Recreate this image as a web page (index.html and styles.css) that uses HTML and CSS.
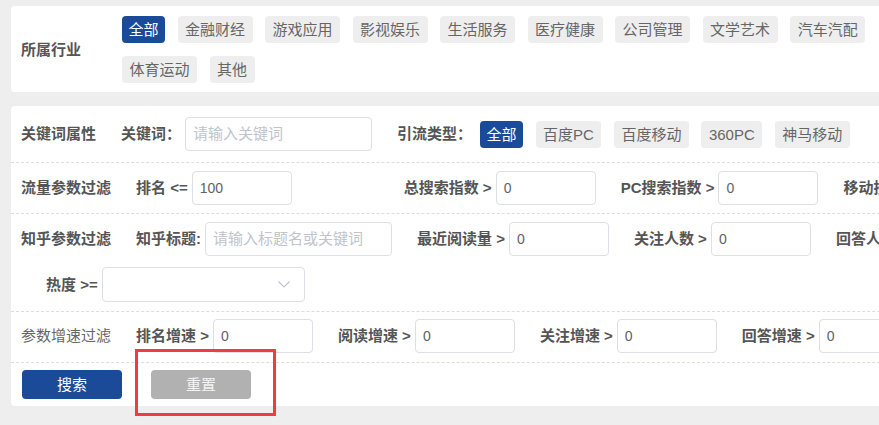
FILE: index.html
```html
<!DOCTYPE html>
<html lang="zh-CN">
<head>
<meta charset="utf-8">
<title>关键词筛选</title>
<link rel="stylesheet" href="styles.css">
</head>
<body>
<div class="page">
  <section class="card industry">
    <div class="industry-label">所属行业</div>
    <div class="tag-list">
      <span class="tag active">全部</span>
      <span class="tag">金融财经</span>
      <span class="tag">游戏应用</span>
      <span class="tag">影视娱乐</span>
      <span class="tag">生活服务</span>
      <span class="tag">医疗健康</span>
      <span class="tag">公司管理</span>
      <span class="tag">文学艺术</span>
      <span class="tag">汽车汽配</span>
      <span class="tag">体育运动</span>
      <span class="tag">其他</span>
    </div>
  </section>

  <section class="card filters">
    <div class="row row-keyword">
      <div class="cat">关键词属性</div>
      <div class="field"><span class="flabel">关键词：</span><input class="inp w-long" type="text" placeholder="请输入关键词"></div>
      <div class="field"><span class="flabel">引流类型：</span>
        <div class="tags">
          <span class="tag active">全部</span>
          <span class="tag">百度PC</span>
          <span class="tag">百度移动</span>
          <span class="tag">360PC</span>
          <span class="tag">神马移动</span>
        </div>
      </div>
    </div>

    <div class="row row-flow">
      <div class="cat">流量参数过滤</div>
      <div class="field"><span class="flabel">排名 &lt;=</span><input class="inp w-short" type="text" value="100"></div>
      <div class="field gap-wide"><span class="flabel">总搜索指数 &gt;</span><input class="inp w-short" type="text" value="0"></div>
      <div class="field"><span class="flabel">PC搜索指数 &gt;</span><input class="inp w-short" type="text" value="0"></div>
      <div class="field"><span class="flabel">移动搜索指数 &gt;</span><input class="inp w-short" type="text" value="0"></div>
    </div>

    <div class="row row-zhihu">
      <div class="line">
        <div class="cat">知乎参数过滤</div>
        <div class="field"><span class="flabel">知乎标题:</span><input class="inp w-long" type="text" placeholder="请输入标题名或关键词"></div>
        <div class="field"><span class="flabel">最近阅读量 &gt;</span><input class="inp w-short" type="text" value="0"></div>
        <div class="field"><span class="flabel">关注人数 &gt;</span><input class="inp w-short" type="text" value="0"></div>
        <div class="field"><span class="flabel">回答人数 &gt;</span><input class="inp w-short" type="text" value="0"></div>
      </div>
      <div class="line">
        <div class="field"><span class="flabel">热度 &gt;=</span>
          <div class="select">
            <svg class="chev" width="12" height="7" viewBox="0 0 12 7"><polyline points="0.5,0.5 6,6 11.5,0.5" fill="none" stroke="#c0c4cc" stroke-width="1.2"/></svg>
          </div>
        </div>
      </div>
    </div>

    <div class="row row-speed">
      <div class="cat cat-light">参数增速过滤</div>
      <div class="field"><span class="flabel">排名增速 &gt;</span><input class="inp w-short" type="text" value="0"></div>
      <div class="field"><span class="flabel">阅读增速 &gt;</span><input class="inp w-short" type="text" value="0"></div>
      <div class="field"><span class="flabel">关注增速 &gt;</span><input class="inp w-short" type="text" value="0"></div>
      <div class="field"><span class="flabel">回答增速 &gt;</span><input class="inp w-short" type="text" value="0"></div>
    </div>

    <div class="actions">
      <button class="btn btn-primary" type="button">搜索</button>
      <button class="btn btn-reset" type="button">重置</button>
    </div>
  </section>

  <div class="highlight"></div>
</div>
</body>
</html>
```

FILE: styles.css
```css
html, body {
  margin: 0;
  padding: 0;
  overflow: hidden;
}

body {
  background: #eeeeee;
  font-family: "Liberation Sans", "Noto Sans CJK SC", sans-serif;
  font-size: 15px;
  color: #555;
  width: 879px;
  height: 425px;
}

.page {
  position: relative;
  padding: 6px 0 0 11px;
  width: 1400px;
}

.card {
  background: #fff;
  border-radius: 4px;
}

/* industry card */
.industry {
  display: flex;
  align-items: center;
  padding: 10px 0 9px 10px;
}

.industry-label {
  width: 101px;
  font-weight: bold;
  line-height: 20px;
}

.tag-list {
  display: flex;
  flex-wrap: wrap;
  gap: 13px 12.5px;
  width: 800px;
}

.tag {
  display: inline-block;
  height: 27px;
  line-height: 27px;
  padding: 0 7.5px;
  background: #eeeeee;
  color: #666;
  border-radius: 4px;
  font-size: 15px;
  white-space: nowrap;
}

.tag.active {
  background: #1a4a98;
  color: #fff;
  padding: 0 6.5px;
}

/* filters card */
.filters {
  margin-top: 14px;
}

.row {
  display: flex;
  align-items: center;
  padding-left: 10px;
  border-bottom: 1px dashed #dddddd;
}

.row-keyword { padding-top: 11px; padding-bottom: 11px; }
.row-flow { padding-top: 8px; padding-bottom: 8px; }
.row-zhihu {
  flex-direction: column;
  align-items: flex-start;
  gap: 11px;
  padding-top: 8px;
  padding-bottom: 9px;
}
.row-speed { padding-top: 7px; padding-bottom: 9px; }

.line {
  display: flex;
  align-items: center;
}

.cat {
  font-weight: bold;
  white-space: nowrap;
  line-height: 20px;
}

.cat-light {
  font-weight: normal;
  color: #666;
}

.field {
  display: flex;
  align-items: center;
  gap: 4px;
  margin-left: 25px;
  white-space: nowrap;
}

.gap-wide {
  margin-left: 112px;
}

.flabel {
  font-weight: bold;
  line-height: 20px;
}

.tags {
  display: flex;
  gap: 12.5px;
  margin-left: 4px;
}

.inp {
  box-sizing: border-box;
  height: 34px;
  border: 1px solid #dcdfe6;
  border-radius: 4px;
  padding: 0 7px;
  font-family: "Liberation Sans", "Noto Sans CJK SC", sans-serif;
  font-size: 14px;
  color: #606266;
  background: #fff;
  outline: none;
}

.inp::placeholder {
  color: #c0c4cc;
  font-size: 15px;
}

.w-long { width: 187px; }
.w-short { width: 100px; }

.select {
  box-sizing: border-box;
  width: 203px;
  height: 35px;
  border: 1px solid #dcdfe6;
  border-radius: 4px;
  display: flex;
  align-items: center;
  justify-content: flex-end;
  padding-right: 14px;
}

.chev {
  display: block;
}

.actions {
  display: flex;
  gap: 29px;
  padding: 7px 0 7px 11px;
}

.btn {
  width: 100px;
  height: 29px;
  border: none;
  border-radius: 4px;
  font-family: "Liberation Sans", "Noto Sans CJK SC", sans-serif;
  font-size: 15px;
  line-height: 29px;
  padding: 0;
  color: #fff;
}

.btn-primary { background: #1a4a98; }
.btn-reset { background: #b1b1b1; color: #f4f4f4; }

/* annotation overlay */
.highlight {
  position: absolute;
  left: 135px;
  top: 349px;
  width: 141px;
  height: 67px;
  box-sizing: border-box;
  border: 3px solid #f23b3b;
}
```
